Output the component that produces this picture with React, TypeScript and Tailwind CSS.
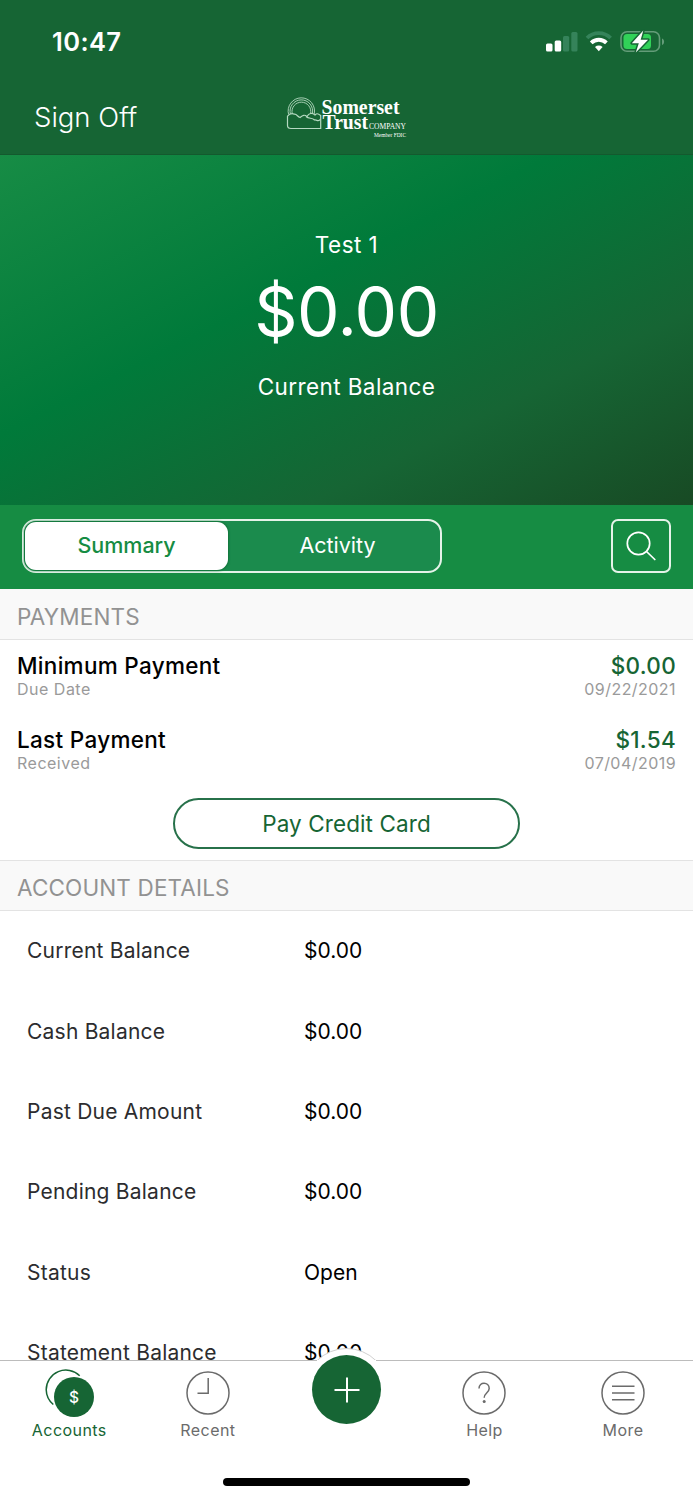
import React from "react";

const details: [string, string][] = [
  ["Current Balance", "$0.00"],
  ["Cash Balance", "$0.00"],
  ["Past Due Amount", "$0.00"],
  ["Pending Balance", "$0.00"],
  ["Status", "Open"],
  ["Statement Balance", "$0.00"],
];

function StatusIcons() {
  return (
    <svg width="120" height="24" viewBox="546 30 120 24" className="block overflow-visible">
      <g fill="#fff">
        <rect x="546" y="43.500" width="6.500" height="8" rx="1.500" />
        <rect x="554.700" y="40.500" width="6.500" height="11" rx="1.500" />
        <g fill="#35835a">
          <rect x="563" y="36" width="6.200" height="15.500" rx="1.500" />
          <rect x="571.300" y="32" width="6.200" height="19.500" rx="1.500" />
        </g>
      </g>
      <g fill="none" strokeWidth="3.800">
        <path d="M587 38a16.500 16.500 0 0 1 23.600 0" stroke="#35835a" />
        <path d="M591.200 42.900a10.800 10.800 0 0 1 15.200 0" stroke="#fff" />
      </g>
      <path d="M595 47a5.600 5.600 0 0 1 7.600 0L598.800 51.200Z" fill="#fff" />
      <rect x="621" y="31.700" width="38.500" height="19.600" rx="6" fill="none" stroke="#649c79" strokeWidth="1.600" />
      <path d="M662 38.500c2.800 1 2.800 5.500 0 6.500z" fill="#649c79" />
      <rect x="623.500" y="34" width="27.500" height="15" rx="3.500" fill="#31d158" />
      <path d="M643.300 30.500 631.800 43.200h7l-3 9.300 12.300-12.800h-7.400z" fill="#fff" stroke="#166534" strokeWidth="3" strokeLinejoin="round" paintOrder="stroke" />
    </svg>
  );
}

function Logo() {
  return (
    <svg width="122" height="44" viewBox="286 96 122 44" className="block overflow-visible">
      <g fill="none" stroke="#b5d9c1" strokeWidth="0.900">
        <path d="M288.600 114.500A13.200 13.200 0 1 1 314.200 114" />
        <path d="M290.400 114A11.300 11.300 0 1 1 312.400 113.500" />
        <path d="M292.200 113.500A9.400 9.400 0 1 1 310.600 113.500" />
        <path strokeWidth="1.200" d="M291 128.500h29.700V115.500c-3.200-2.500-4.200-2-5.700-.5-3-2.500-6-2-8 1.500-2.500-2-4-1.500-7 1-2.500-.5-3-3.500-5.500-3.300-3-1.500-5-.5-7 2V125.500c0 2 1.200 3 3.500 3Z" />
        <path strokeWidth="1.200" d="M306 116.500c3 3 6 .500 8.500 3.500 2.500-.5 4 2.500 6-1" />
      </g>
      <g fill="#fff" fontFamily="'Liberation Serif', serif">
        <text x="321.500" y="113.500" fontSize="20.500" fontWeight="700" textLength="78" lengthAdjust="spacingAndGlyphs">Somerset</text>
        <text x="322.500" y="129.400" fontSize="20.500" fontWeight="700" textLength="45.500" lengthAdjust="spacingAndGlyphs">Trust</text>
        <text x="369" y="129.400" fontSize="8.800" textLength="37" lengthAdjust="spacingAndGlyphs">COMPANY</text>
        <text x="374" y="136.600" fontSize="5.800" textLength="32" lengthAdjust="spacingAndGlyphs">Member FDIC</text>
      </g>
    </svg>
  );
}

function SectionHeader({ children, className }: { children: string; className: string }) {
  return (
    <h2 className={"flex shrink-0 items-center border-b border-[#e3e3e3] bg-[#f9f9f9] pl-[17px] pt-[5px] text-[22.500px] tracking-[0.140px] text-[#929292] " + className}>
      {children}
    </h2>
  );
}

function Payment({ title, sub, amount, date }: { title: string; sub: string; amount: string; date: string }) {
  return (
    <div className="flex h-[74px] shrink-0 justify-between px-[17px] pt-[12px]">
      <div>
        <div className="text-[22.500px] font-medium leading-7 tracking-[0.300px] text-black">{title}</div>
        <div className="text-[16px] leading-[19px] tracking-[0.500px] text-[#9a9a9a]">{sub}</div>
      </div>
      <div className="text-right">
        <div className="text-[22.500px] font-medium leading-7 tracking-[0.300px] text-[#166534]">{amount}</div>
        <div className="text-[16px] leading-[19px] tracking-[0.450px] text-[#9a9a9a]">{date}</div>
      </div>
    </div>
  );
}

function Tab({ label, className, children }: { label: string; className: string; children: React.ReactNode }) {
  return (
    <button className={"flex w-[138.600px] flex-col items-center pt-[7px] " + className}>
      <svg width="52" height="50" viewBox="0 0 52 50" fill="none" stroke="currentColor" strokeWidth="1.500">{children}</svg>
      <span className="mt-[2px] text-[16px] leading-5 tracking-[0.450px]">{label}</span>
    </button>
  );
}

export default function App() {
  return (
    <div className="flex h-[1500px] w-[693px] flex-col overflow-hidden bg-white font-[Inter,sans-serif]">
      <header className="h-[155px] shrink-0 border-b border-[#14592e] bg-[#166534] text-white">
        <div className="flex h-[84px] items-center justify-between pl-[52px] pr-[27px]">
          <span className="pt-px text-[25.500px] font-semibold tracking-[0.400px]">10:47</span>
          <StatusIcons />
        </div>
        <div className="flex h-[68px] items-center">
          <button className="w-[286px] pl-[34px] text-left text-[27.500px] font-[350]">Sign Off</button>
          <Logo />
        </div>
      </header>

      <section className="flex h-[350px] shrink-0 flex-col items-center bg-[linear-gradient(to_bottom_right,#178c45_0%,#007a3a_40%,#166534_72%,#184a24_100%)] pt-[74px] text-white">
        <div className="text-[22.500px] leading-8 tracking-[0.450px]">Test 1</div>
        <div className="mt-[11px] text-[67.500px] leading-[80px] tracking-[-0.500px]">$0.00</div>
        <div className="mt-[19px] text-[22.500px] leading-8 tracking-[0.400px]">Current Balance</div>
      </section>

      <div className="flex h-[84px] shrink-0 items-center justify-between bg-[#168c43] px-[22px] pb-[3px]">
        <div className="flex h-[54px] w-[420px] rounded-[14px] border-2 border-[#e5f3e9] bg-[#1b8b4d] p-px text-[21.500px]">
          <button className="w-[203px] rounded-[11px] bg-white font-medium text-[#168c43] shadow-[0_0_2px_1px_#11743a]">Summary</button>
          <button className="flex-1 pl-[8px] text-white">Activity</button>
        </div>
        <button className="flex h-[54px] w-[60px] items-center justify-center rounded-[7px] border-2 border-[#e5f3e9]">
          <svg width="30" height="30" viewBox="0 0 30 30" fill="none" stroke="#fff" strokeWidth="1.700" strokeLinecap="round">
            <circle cx="12.500" cy="12.500" r="11.200" />
            <path d="m20.500 20.500 8.300 8" />
          </svg>
        </button>
      </div>

      <main className="flex h-[771px] shrink-0 flex-col overflow-hidden">
        <SectionHeader className="h-[51px]">PAYMENTS</SectionHeader>
        <Payment title="Minimum Payment" sub="Due Date" amount="$0.00" date="09/22/2021" />
        <Payment title="Last Payment" sub="Received" amount="$1.54" date="07/04/2019" />
        <div className="flex h-[73px] shrink-0 justify-center border-b border-[#e3e3e3] pt-[10px]">
          <button className="h-[51px] w-[347px] rounded-full border-2 border-[#27714a] text-[22.500px] tracking-[0.100px] text-[#166534]">Pay Credit Card</button>
        </div>
        <SectionHeader className="h-[50px]">ACCOUNT DETAILS</SectionHeader>
        <dl>
          {details.map(([name, value]) => (
            <div key={name} className="flex h-[80.300px] items-center pl-[27px] text-[21px]">
              <dt className="w-[277px] tracking-[0.220px] text-[#2c2c2e]">{name}</dt>
              <dd className="text-black">{value}</dd>
            </div>
          ))}
        </dl>
      </main>

      <footer className="relative h-[140px] shrink-0 border-t border-[#bcbcbc] bg-white text-[#6b6b6b]">
        <div className="absolute left-[304px] top-[-13px] h-[12px] w-[85px] overflow-hidden">
          <div className="h-[85px] w-[85px] rounded-full border border-[#d0d0d0] bg-white" />
        </div>
        <div className="absolute left-[317px] top-[-1px] h-[2px] w-[59px] bg-white" />
        <button className="absolute left-[312px] top-[-6px] flex h-[69px] w-[69px] items-center justify-center rounded-full bg-[#166534]">
          <svg width="26" height="26" viewBox="0 0 26 26" stroke="#fff" strokeWidth="2"><path d="M13 .5v25M.5 13h25" /></svg>
        </button>
        <nav className="flex">
          <Tab label="Accounts" className="text-[#166534]">
            <path d="M10.300 36.500A20 20 0 0 1 3.200 21.700A19.700 19.700 0 0 1 36.700 7.700" />
            <circle cx="31" cy="29" r="20" fill="currentColor" stroke="none" />
            <text x="31" y="34.500" textAnchor="middle" fontSize="15.500" fontWeight="500" fill="#fff" stroke="none">$</text>
          </Tab>
          <Tab label="Recent" className="text-[#6b6b6b]">
            <circle cx="26" cy="25" r="21" />
            <path d="M26.200 10v15.200H15.500" />
          </Tab>
          <div className="w-[138px]" />
          <Tab label="Help" className="text-[#6b6b6b]">
            <circle cx="26" cy="25" r="21" />
            <path d="M21 20.500c0-7.300 10.200-6.800 10.200 0 0 4-5 4.500-5 9.200" />
            <circle cx="26.200" cy="33.500" r="1.500" fill="currentColor" stroke="none" />
          </Tab>
          <Tab label="More" className="text-[#6b6b6b]">
            <circle cx="26" cy="25" r="21" />
            <path d="M15 18.300h22.500M15 25h22.500M15 31.700h22.500" />
          </Tab>
        </nav>
        <div className="absolute left-[223px] top-[117px] h-[8px] w-[247px] rounded-full bg-black" />
      </footer>
    </div>
  );
}
